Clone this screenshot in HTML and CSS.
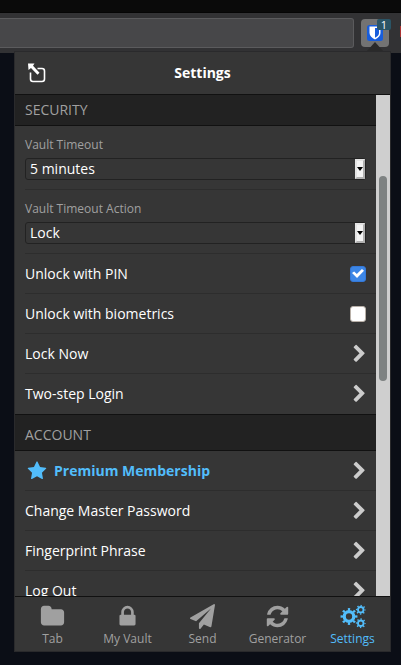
FILE: index.html
```html
<!DOCTYPE html>
<html lang="en">
<head>
<meta charset="utf-8">
<meta name="viewport" content="width=device-width, initial-scale=1">
<title>Settings</title>
<link rel="stylesheet" href="styles.css">
</head>
<body>
<svg class="sprite" aria-hidden="true">
  <symbol id="chevron" viewBox="0 0 1792 1792"><path d="M1363 877l-742 742q-19 19-45 19t-45-19l-166-166q-19-19-19-45t19-45l531-531-531-531q-19-19-19-45t19-45l166-166q19-19 45-19t45 19l742 742q19 19 19 45t-19 45z"/></symbol>
  <symbol id="gear" viewBox="-10 -10 20 20">
    <circle r="5.300" fill="none" stroke="currentColor" stroke-width="3.600"/>
    <circle r="8" fill="none" stroke="currentColor" stroke-width="2.800" pathLength="80" stroke-dasharray="4 6" stroke-dashoffset="2"/>
  </symbol>
</svg>
<div class="frame"></div>
<div class="toolbar">
  <div class="address"></div>
  <button class="extension" aria-label="Vault extension">
    <svg class="shield" viewBox="0 0 16 16" aria-hidden="true"><rect width="16" height="16" rx="2.500" fill="#175ddc"/><path d="M2.500 1.500h11v6.500c0 3-2.500 5-5.500 6.500C5 13 2.500 11 2.500 8z" fill="#fff"/><path d="M8 3h4v5c0 2-1.700 3.500-4 4.700z" fill="#175ddc"/></svg>
    <span class="badge">1</span>
  </button>
  <div class="neighbor"></div>
</div>
<div class="popup">
  <header class="header">
    <button class="popout" aria-label="Pop out">
      <svg viewBox="0 0 18 20" aria-hidden="true"><path d="M9.500 5.500H14a2.500 2.500 0 0 1 2.500 2.500v8a2.500 2.500 0 0 1-2.500 2.500H5A2.500 2.500 0 0 1 2.500 16V9.500" fill="none" stroke="#fff" stroke-width="1.600"/><path d="M0 .5h6.500L5 2.700l6.500 7-2 2L3 5 .5 7z" fill="#fff"/></svg>
    </button>
    <h1>Settings</h1>
  </header>
  <div class="viewport">
    <main class="content">
      <section>
        <h2>SECURITY</h2>
        <div class="rows">
          <div class="row field"><label for="timeout">Vault Timeout</label>
            <div class="select"><select id="timeout"><option>5 minutes</option></select></div></div>
          <div class="row field"><label for="action">Vault Timeout Action</label>
            <div class="select"><select id="action"><option>Lock</option></select></div></div>
          <div class="row"><label for="pin">Unlock with PIN</label><input type="checkbox" id="pin" checked></div>
          <div class="row"><label for="bio">Unlock with biometrics</label><input type="checkbox" id="bio"></div>
          <a class="row" href="#lock">Lock Now<svg class="chevron"><use href="#chevron"/></svg></a>
          <a class="row" href="#twostep">Two-step Login<svg class="chevron"><use href="#chevron"/></svg></a>
        </div>
      </section>
      <section>
        <h2 class="tall">ACCOUNT</h2>
        <div class="rows">
          <a class="row" href="#premium"><span class="premium"><svg viewBox="0 0 1792 1792" aria-hidden="true"><path d="M1728 647q0 22-26 48l-363 354 86 500q1 7 1 20 0 21-10.500 35.500t-30.500 14.500q-19 0-40-12l-449-236-449 236q-22 12-40 12-21 0-31.500-14.500t-10.500-35.500q0-6 2-20l86-500-364-354q-25-27-25-48 0-37 56-46l502-73 225-455q19-41 49-41t49 41l225 455 502 73q56 9 56 46z"/></svg>Premium Membership</span><svg class="chevron"><use href="#chevron"/></svg></a>
          <a class="row" href="#password">Change Master Password<svg class="chevron"><use href="#chevron"/></svg></a>
          <a class="row" href="#fingerprint">Fingerprint Phrase<svg class="chevron"><use href="#chevron"/></svg></a>
          <a class="row" href="#logout">Log Out<svg class="chevron"><use href="#chevron"/></svg></a>
        </div>
      </section>
    </main>
    <div class="scrollbar"><div class="thumb"></div></div>
  </div>
  <nav class="tabs">
    <a href="#tab"><svg viewBox="0 0 1792 1792" aria-hidden="true"><path d="M1728 608v704q0 92-66 158t-158 66h-1216q-92 0-158-66t-66-158v-960q0-92 66-158t158-66h320q92 0 158 66t66 158v32h672q92 0 158 66t66 158z"/></svg>Tab</a>
    <a href="#vault"><svg viewBox="0 0 1792 1792" aria-hidden="true"><path d="M640 768h512v-192q0-106-75-181t-181-75-181 75-75 181v192zm832 96v576q0 40-28 68t-68 28h-960q-40 0-68-28t-28-68v-576q0-40 28-68t68-28h32v-192q0-184 132-316t316-132 316 132 132 316v192h32q40 0 68 28t28 68z"/></svg>My Vault</a>
    <a href="#send"><svg viewBox="0 0 1792 1792" aria-hidden="true"><path d="M1764 11q33 24 27 64l-256 1536q-5 29-32 45-14 8-31 8-11 0-24-5l-453-185-242 295q-18 23-49 23-13 0-22-4-19-7-30.500-23.500t-11.500-36.500v-349l864-1059-1069 925-395-162q-37-14-40-55-2-40 32-59l1664-960q15-9 32-9 20 0 36 11z"/></svg>Send</a>
    <a href="#generator"><svg viewBox="0 0 1792 1792" aria-hidden="true"><path d="M1639 1056q0 5-1 7-64 268-268 434.500t-478 166.500q-146 0-282.500-55t-243.500-157l-129 129q-19 19-45 19t-45-19-19-45v-448q0-26 19-45t45-19h448q26 0 45 19t19 45-19 45l-137 137q71 66 161 102t187 36q134 0 250-65t186-179q11-17 53-117 8-23 30-23h192q13 0 22.500 9.500t9.500 22.500zm25-800v448q0 26-19 45t-45 19h-448q-26 0-45-19t-19-45 19-45l138-138q-148-137-349-137-134 0-250 65t-186 179q-11 17-53 117-8 23-30 23h-199q-13 0-22.500-9.500t-9.500-22.500v-7q65-268 270-434.500t480-166.500q146 0 284 55.500t245 156.500l130-129q19-19 45-19t45 19 19 45z"/></svg>Generator</a>
    <a class="active" href="#settings" aria-current="page"><svg class="cogs" viewBox="0 0 26 25" aria-hidden="true"><use href="#gear" x="0" y="3.500" width="18" height="18"/><use href="#gear" x="15.500" y="0.500" width="10.500" height="10.500"/><use href="#gear" x="15.500" y="14" width="10.500" height="10.500"/></svg>Settings</a>
  </nav>
</div>
</body>
</html>
```
FILE: styles.css
```css
*, *::before, *::after { box-sizing: border-box; }
body {
  margin: 0;
  height: 100vh;
  display: flex;
  flex-direction: column;
  overflow: hidden;
  background: #0b0e16;
  color: #fff;
  font: 14px/20px "Open Sans", "Noto Sans", sans-serif;
}
button { padding: 0; border: 0; background: none; }
a { color: inherit; text-decoration: none; }
svg { fill: currentColor; }
.sprite { position: absolute; width: 0; height: 0; }

.frame { flex: none; height: 13px; background: #0a0a0a; border-bottom: 1px solid #050505; }
.toolbar {
  flex: none;
  display: flex;
  height: 40px;
  padding-top: 5px;
  background: #323234;
}
.address {
  flex: 1;
  height: 30px;
  background: #474749;
  border: 1px solid #5b5b5d;
  border-left: 0;
  border-radius: 0 3px 3px 0;
}
.extension {
  position: relative;
  width: 28px;
  height: 28px;
  margin: 1px 0 0 7px;
  border-radius: 4px;
  background: #737373;
}
.extension::after {
  content: "";
  position: absolute;
  left: 6px;
  bottom: -4px;
  border: 8px solid transparent;
  border-top: 0;
  border-bottom: 9px solid #2a2a2a;
}
.shield { position: absolute; left: 6px; top: 6px; width: 16px; height: 16px; }
.badge {
  position: absolute;
  left: 16px;
  top: 0;
  width: 14px;
  height: 11px;
  border-radius: 2px;
  background: #2b5566;
  color: #fff;
  font: 11px/11px "Open Sans", sans-serif;
}
.neighbor { width: 1px; height: 11px; margin: 8px 0 0 11px; background: #a33; }

.popup {
  position: relative;
  flex: 1;
  min-height: 0;
  display: flex;
  flex-direction: column;
  margin: -2px 10px 13px 14px;
  border: 1px solid #2a2a2c;
  background: #363636;
}
.header {
  flex: none;
  display: grid;
  grid-template-columns: 1fr auto 1fr;
  align-items: center;
  height: 43px;
  padding: 0 13px;
  border-bottom: 1px solid #111;
}
.popout { width: 18px; height: 20px; }
.popout svg { display: block; width: 18px; height: 20px; }
h1 { margin: 0; font-size: 14px; line-height: 20px; font-weight: 700; }

.viewport { flex: 1; min-height: 0; display: flex; }
.content { flex: 1; overflow: hidden; }
h2 {
  margin: 0;
  padding: 5px 10px;
  background: #222;
  border-bottom: 1px solid #111;
  color: #a0a0a0;
  font-size: 14px;
  line-height: 20px;
  font-weight: 400;
}
h2.tall { padding: 10px 10px 5px; border-top: 1px solid #111; }
.rows { padding-left: 10px; }
.row {
  display: flex;
  align-items: center;
  justify-content: space-between;
  height: 40px;
  padding-right: 10px;
  border-bottom: 1px solid #2d2d2d;
}
.row:last-child { border-bottom-color: transparent; }
.field { display: block; height: 64px; padding-top: 9px; }
.field label { display: block; color: #a0a0a0; font-size: 12px; line-height: 20px; }
.select { position: relative; margin-top: 3px; }
select {
  display: block;
  appearance: none;
  width: 100%;
  height: 22px;
  padding: 0 4px;
  border: 1px solid #222;
  border-radius: 3px;
  background: transparent;
  color: #fff;
  font: inherit;
  line-height: 20px;
}
.select::before {
  content: "";
  position: absolute;
  right: 1px;
  top: 1px;
  width: 10px;
  height: 20px;
  border: 2px solid;
  border-color: #e4e4e4 #b0b0b0 #b0b0b0 #e4e4e4;
  background: #f4f4f4;
  pointer-events: none;
}
.select::after {
  content: "";
  position: absolute;
  right: 3px;
  top: 9px;
  border: 3px solid transparent;
  border-top: 4px solid #000;
  border-bottom: 0;
  pointer-events: none;
}
input[type="checkbox"] {
  appearance: none;
  width: 16px;
  height: 16px;
  margin: 0;
  border: 1px solid #b8b0a8;
  border-radius: 3px;
  background: #fff;
}
input[type="checkbox"]:checked {
  display: grid;
  place-items: center;
  border-color: #3478d8;
  background: #3c86e6;
}
input[type="checkbox"]:checked::after {
  content: "";
  width: 12px;
  height: 9px;
  background: #fff;
  clip-path: polygon(0 45%, 18% 28%, 40% 55%, 83% 0, 100% 20%, 42% 100%);
}
.chevron { width: 19px; height: 20px; margin-right: -3px; color: #ccc; }
.premium { display: flex; align-items: center; gap: 7px; padding-left: 2px; color: #52bdfb; font-weight: 700; }
.premium svg { width: 20px; height: 20px; }

.scrollbar { flex: none; width: 14px; padding: 81px 3px 0; background: #cfcfcf; }
.thumb { height: 205px; border-radius: 4px; background: #7e8282; }

.tabs { flex: none; display: grid; grid-template-columns: repeat(5, 1fr); height: 55px; border-top: 1px solid #111; }
.tabs a {
  display: flex;
  flex-direction: column;
  align-items: center;
  padding-top: 7px;
  color: #a0a0a0;
  font-size: 12px;
  line-height: 20px;
}
.tabs svg { width: 25px; height: 25px; }
.tabs .cogs { width: 26px; }
.tabs .active { color: #52bdfb; }
```
